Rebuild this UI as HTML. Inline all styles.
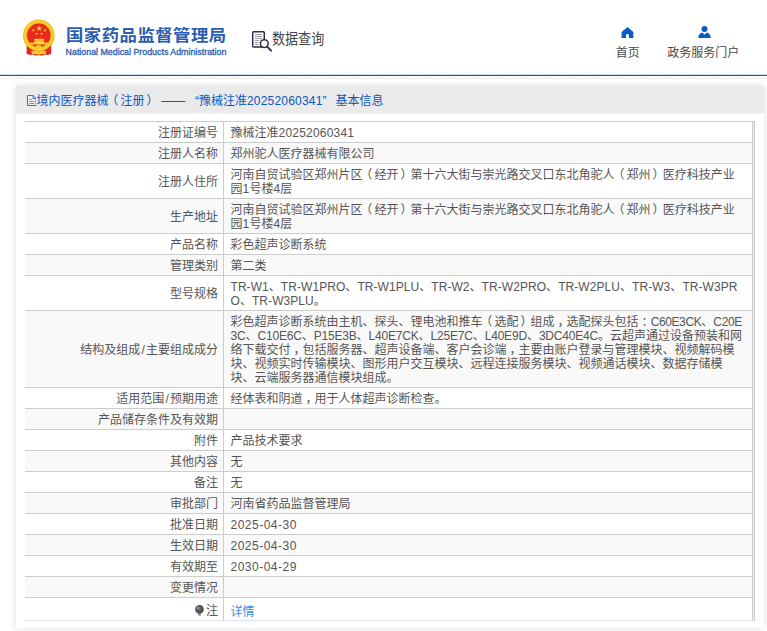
<!DOCTYPE html>
<html lang="zh-CN">
<head>
<meta charset="utf-8">
<title>国家药品监督管理局 数据查询</title>
<style>
*{box-sizing:border-box;margin:0;padding:0}
html,body{width:767px;height:631px;overflow:hidden;background:#fff}
body{font-family:"Liberation Sans","Noto Sans CJK SC",sans-serif;font-size:12px;color:#333;position:relative}
.hdr{position:absolute;left:0;top:0;width:767px;height:76px;background:#fff}
.hdr .line{position:absolute;left:0;top:75px;width:767px;height:1px;background:#0b5cbd;box-shadow:0 -1px 0 rgba(11,92,189,.22)}
.hatch{position:absolute;left:0;width:767px;height:1px}
.h1{top:77px;background:repeating-linear-gradient(90deg,transparent 0,transparent 2px,#dcdcdc 2px,#dcdcdc 3px)}
.h2{top:78px;background:repeating-linear-gradient(90deg,transparent 0,transparent 1px,#e2e2e2 1px,#e2e2e2 2px,transparent 2px,transparent 3px)}
.emblem{position:absolute;left:18px;top:16px;width:42px;height:42px}
.t-cn{position:absolute;left:65.5px;top:22.5px;font-size:16.4px;line-height:24px;font-weight:bold;color:#2a5db0;white-space:nowrap;letter-spacing:.45px;transform:scaleX(1.06);transform-origin:0 0}
.t-en{position:absolute;left:65.6px;top:45.6px;font-size:8.85px;line-height:12px;color:#2a5db0;white-space:nowrap;-webkit-text-stroke:.3px #2a5db0}
.q-ico{position:absolute;left:251px;top:30px;width:22px;height:22px}
.q-txt{position:absolute;left:271.6px;top:29px;font-size:15px;line-height:20px;color:#444;white-space:nowrap;transform:scaleX(.87);transform-origin:0 0}
.nav{position:absolute;top:44.5px;font-size:12px;line-height:16px;color:#4a4a4a;white-space:nowrap;text-align:center}
.nav1{left:597.7px;width:60px}
.nav2{left:653.3px;width:100px}
.ico{position:absolute}
.panel{position:absolute;left:16px;top:86px;width:748px;height:542px;background:#fff;box-shadow:0 0 7px rgba(0,0,0,.13)}
.ptitle{height:28px;border-bottom:1px solid #f4f5f9;background:#eaeaea;color:#0d57c2;font-size:12px;line-height:27px;padding-left:10px;white-space:nowrap;position:relative}
.ptitle svg{position:absolute;left:10.5px;top:8.7px}
.ptitle span.t{position:absolute;left:20.5px;top:2px}
.tw{position:absolute;left:9px;top:35px;width:730px;border-right:1px solid #ccc;border-top:1px solid #ccc;padding-right:1px;background:#e9edf6}
table{border-collapse:separate;border-spacing:0;width:728px;table-layout:fixed;background:#fff;margin-top:-1px}
td{border-top:1px solid #ccc;border-right:1px solid #ccc;line-height:14px;padding:4px 6px 2px 6.5px;vertical-align:middle;font-size:12px;color:#555}
td.l{text-align:right;width:199px;padding-right:5px}
td.v{text-align:left;white-space:nowrap}
tr:nth-child(even) td{background:#f9f9f9}
tr.last td{height:24px;border-bottom:1px solid #e1e6f0;padding-top:5px;padding-bottom:1px}
a{color:#368ced;text-decoration:none;position:relative;top:1px}
i{font-style:normal}
.n{letter-spacing:.2px}
.a{letter-spacing:.06px}
.b{letter-spacing:-.38px}
.c{letter-spacing:-.2px}
.d{letter-spacing:.5px}
.s{padding:0 1.2px}
.pl{position:relative;left:-2.2px}
.pr{position:relative;left:2px}
.pc{position:relative;left:2.9px}
.bulb{display:inline-block;width:9px;height:11px;vertical-align:-1px;margin-right:2px}
</style>
</head>
<body>
<div class="hdr">
  <svg class="emblem" viewBox="0 0 42 42">
    <path d="M8.600 28.500V37.800Q11.500 39.600 14.500 38.600Q17.500 40.400 20.800 38.900Q24.200 40.400 27.200 38.600Q30.200 39.600 33.200 37.800V28.500Z" fill="#e2281b"/>
    <path d="M13.200 35Q17 33.800 20.800 35.600Q24.600 33.800 28.400 35L27.500 38.300Q24 37.300 20.800 38.700Q17.600 37.300 14.100 38.300Z" fill="#f6cb2c"/>
    <circle cx="20.800" cy="19.400" r="15.800" fill="#f2b91c"/>
    <circle cx="20.800" cy="19.400" r="14.900" fill="#f8cf30"/>
    <circle cx="20.800" cy="19.400" r="12.600" fill="#f0b41a"/>
    <circle cx="20.800" cy="19.300" r="11.700" fill="#e92a1d"/>
    <path d="M21.150 9.300l.75 2.100h2.250l-1.800 1.350.7 2.150-1.900-1.300-1.900 1.300.7-2.150-1.800-1.350h2.250z" fill="#f8d236"/>
    <circle cx="15.300" cy="14.400" r="1.050" fill="#f6c92e"/><circle cx="27" cy="14.400" r="1.050" fill="#f6c92e"/>
    <circle cx="18.700" cy="17.800" r="1.050" fill="#f6c92e"/><circle cx="23.600" cy="17.800" r="1.050" fill="#f6c92e"/>
    <path d="M16.800 22.700h8.700l.9 1.500h-10.500zM16.300 24.600h9.700v2h-9.700zM12.300 26.600h17.700v1.900H12.300z" fill="#f8d236"/>
    <ellipse cx="20.800" cy="30.700" rx="2.900" ry="1.700" fill="#f6c92e"/>
    <path d="M16 32.600Q20.800 34.600 25.600 32.600L25 33.800Q20.800 35.600 16.600 33.800Z" fill="#f8d236"/>
  </svg>
  <div class="t-cn">国家药品监督管理局</div>
  <div class="t-en">National Medical Products Administration</div>
  <svg class="q-ico" viewBox="0 0 22 22">
    <rect x="1.700" y="1.700" width="11.600" height="15.400" rx="1" fill="#fff" stroke="#2e2e48" stroke-width="1.500"/>
    <path d="M4 4.600h7M4 6.600h7M4 8.600h7M4 10.600h4.500M4 12.600h3.500M4 14.600h3.500" stroke="#9a9aa4" stroke-width="1"/>
    <circle cx="13.300" cy="13.600" r="3.900" fill="#fff" stroke="#2e2e48" stroke-width="1.500"/>
    <path d="M16.200 16.600L20 20.600" stroke="#2e2e48" stroke-width="2" stroke-linecap="round"/>
  </svg>
  <div class="q-txt">数据查询</div>
  <svg class="ico" style="left:621px;top:27px" width="13" height="11" viewBox="0 0 13 11">
    <path d="M6.500 0L0.600 5V11H5.100V7.200H7.900V11H12.400V5Z" fill="#0a5bc8"/>
  </svg>
  <div class="nav nav1">首页</div>
  <svg class="ico" style="left:698px;top:26px" width="13" height="12" viewBox="0 0 13 12">
    <circle cx="6.500" cy="3" r="3" fill="#0a5bc8"/>
    <path d="M0.300 12C0.300 8.500 2.500 6.800 4.300 6.500L6.500 8.800L8.700 6.500C10.500 6.800 12.700 8.500 12.700 12Z" fill="#0a5bc8"/>
  </svg>
  <div class="nav nav2">政务服务门户</div>
  <div class="line"></div>
</div>
<div class="hatch h1"></div><div class="hatch h2"></div>
<div class="panel">
  <div class="ptitle">
    <svg width="9.500" height="11" viewBox="0 0 9.500 11"><path d="M0.500 0.500H6L9 3.500V10.500H0.500Z" fill="#eef0f4" stroke="#1f64cc" stroke-width=".9"/><path d="M6 0.500V3.500H9" fill="none" stroke="#1f64cc" stroke-width=".8"/><path d="M2.300 4.500H5M2.300 6.500H7.200M2.300 8.500H7.200" fill="none" stroke="#5c8ad8" stroke-width=".9"/></svg>
    <span class="t">境内医疗器械<i class="pl">（</i>注册<i class="pr">）</i><i style="margin-left:4.7px">——</i><i style="margin-left:9.7px">“</i>豫械注准<i class="n">20252060341</i>”<i style="margin-left:9px">基本信息</i></span>
  </div>
  <div class="tw">
  <table>
    <tr><td class="l">注册证编号</td><td class="v">豫械注准<i class="n">20252060341</i></td></tr>
    <tr><td class="l">注册人名称</td><td class="v">郑州驼人医疗器械有限公司</td></tr>
    <tr><td class="l">注册人住所</td><td class="v">河南自贸试验区郑州片区<i class="pl">（</i>经开<i class="pr">）</i>第十六大街与崇光路交叉口东北角驼人<i class="pl">（</i>郑州<i class="pr">）</i>医疗科技产业<br>园<i class="n">1</i>号楼<i class="n">4</i>层</td></tr>
    <tr><td class="l">生产地址</td><td class="v">河南自贸试验区郑州片区<i class="pl">（</i>经开<i class="pr">）</i>第十六大街与崇光路交叉口东北角驼人<i class="pl">（</i>郑州<i class="pr">）</i>医疗科技产业<br>园<i class="n">1</i>号楼<i class="n">4</i>层</td></tr>
    <tr><td class="l">产品名称</td><td class="v">彩色超声诊断系统</td></tr>
    <tr><td class="l">管理类别</td><td class="v">第二类</td></tr>
    <tr><td class="l">型号规格</td><td class="v"><i class="a">TR-W1、TR-W1PRO、TR-W1PLU、TR-W2、TR-W2PRO、TR-W2PLU、TR-W3、TR-W3PR</i><br><i class="a">O、TR-W3PLU。</i></td></tr>
    <tr><td class="l">结构及组成<i class="s">/</i>主要组成成分</td><td class="v">彩色超声诊断系统由主机、探头、锂电池和推车<i class="pl">（</i>选配<i class="pr">）</i>组成<i class="pc">，</i>选配探头包括<i class="pc">：</i><i class="b">C60E3CK</i>、<i class="b">C20E</i><br><i class="c">3C</i>、<i class="c">C10E6C</i>、<i class="c">P15E3B</i>、<i class="c">L40E7CK</i>、<i class="c">L25E7C</i>、<i class="c">L40E9D</i>、<i class="c">3DC40E4C</i>。云超声通过设备预装和网<br>络下载交付<i class="pc">，</i>包括服务器、超声设备端、客户会诊端<i class="pc">，</i>主要由账户登录与管理模块、视频解码模<br>块、视频实时传输模块、图形用户交互模块、远程连接服务模块、视频通话模块、数据存储模<br>块、云端服务器通信模块组成。</td></tr>
    <tr><td class="l">适用范围<i class="s">/</i>预期用途</td><td class="v">经体表和阴道<i class="pc">，</i>用于人体超声诊断检查。</td></tr>
    <tr><td class="l">产品储存条件及有效期</td><td class="v"></td></tr>
    <tr><td class="l">附件</td><td class="v">产品技术要求</td></tr>
    <tr><td class="l">其他内容</td><td class="v">无</td></tr>
    <tr><td class="l">备注</td><td class="v">无</td></tr>
    <tr><td class="l">审批部门</td><td class="v">河南省药品监督管理局</td></tr>
    <tr><td class="l">批准日期</td><td class="v"><i class="d">2025-04-30</i></td></tr>
    <tr><td class="l">生效日期</td><td class="v"><i class="d">2025-04-30</i></td></tr>
    <tr><td class="l">有效期至</td><td class="v"><i class="d">2030-04-29</i></td></tr>
    <tr><td class="l">变更情况</td><td class="v"></td></tr>
    <tr class="last"><td class="l"><svg class="bulb" viewBox="0 0 9 11"><circle cx="4.500" cy="4.400" r="4.300" fill="#505050"/><circle cx="3.600" cy="3.400" r="2.200" fill="#6e6e6e"/><circle cx="3.200" cy="2.900" r="1.100" fill="#959595"/><path d="M3 8.600h3v1.200H3z" fill="#6a6a6a"/><path d="M3.400 10.100h2.200v.7H3.400z" fill="#8a8a8a"/></svg>注</td><td class="v"><a>详情</a></td></tr>
  </table>
  </div>
</div>
</body>
</html>
